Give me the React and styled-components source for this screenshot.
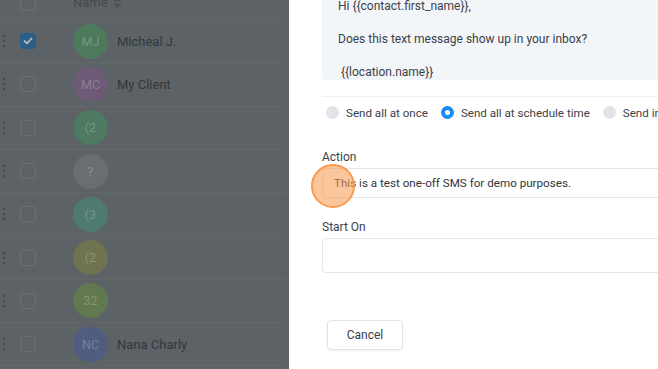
import React from 'react';
import styled, { createGlobalStyle } from 'styled-components';

const GlobalStyle = createGlobalStyle`
  html, body {
    margin: 0;
    padding: 0;
    overflow: hidden;
    background: #ffffff;
  }
  body {
    font-family: Roboto, "Liberation Sans", sans-serif;
  }
`

const Page = styled.div`
  display: grid;
  grid-template-columns: 289px 1fr;
  width: 658px;
  height: 369px;
  overflow: hidden;
`

/* dimmed contact list behind the drawer */
const ListSide = styled.div`
  background: #5c6266;
  overflow: hidden;
  padding-right: 2px;
`
const HeaderRow = styled.div`
  display: flex;
  align-items: center;
  height: 33px;
  margin-top: -14px;
  border-bottom: 1px solid #63686b;
`
const Row = styled.div`
  display: flex;
  align-items: center;
  height: 43.3px;
  box-sizing: border-box;
  border-bottom: 1px solid #63686b;
`
const Grip = styled.div`
  width: 20px;
  display: flex;
  flex-direction: column;
  align-items: flex-start;
  padding-left: 3px;
  box-sizing: border-box;
  gap: 3px;
  span {
    width: 2px;
    height: 2px;
    border-radius: 50%;
    background: #3c4043;
  }
`
const Check = styled.div`
  width: 16px;
  height: 16px;
  box-sizing: border-box;
  border-radius: 3px;
  border: 1px solid ${(p) => (p.checked ? '#2d5f86' : '#6a6f72')};
  background: ${(p) => (p.checked ? '#2d5f86' : 'transparent')};
  display: flex;
  align-items: center;
  justify-content: center;
  margin-right: 37px;
`
const Avatar = styled.div`
  width: 35px;
  height: 35px;
  border-radius: 50%;
  background: ${(p) => p.color};
  color: rgba(255, 255, 255, 0.22);
  font-size: 12.5px;
  display: flex;
  align-items: center;
  justify-content: center;
  flex-shrink: 0;
`
const Name = styled.div`
  margin-left: 9px;
  font-size: 13px;
  color: #34383b;
`
const HeadName = styled.div`
  font-size: 13px;
  color: #464b4e;
  display: flex;
  align-items: center;
  gap: 5px;
`

/* drawer */
const Drawer = styled.div`
  background: #ffffff;
  padding-left: 33px;
  display: flex;
  flex-direction: column;
  overflow: hidden;
  color: #3b4149;
  font-size: 12px;
`
const MessageBox = styled.div`
  margin-top: -10px;
  height: 90px;
  box-sizing: border-box;
  padding: 8px 16px 0;
  background: #f3f6f9;
  border-radius: 0 0 4px 4px;
  line-height: 16.5px;
  color: #3b4149;
  overflow: hidden;
  white-space: pre;
  width: 420px;
`
const Divider = styled.div`
  margin-top: 16px;
  border-top: 1px solid #eef0f3;
  width: 420px;
`
const RadioRow = styled.div`
  display: flex;
  align-items: center;
  height: 31px;
  padding-left: 4px;
  white-space: nowrap;
  font-size: 11.6px;
`
const RadioOption = styled.label`
  display: flex;
  align-items: center;
  gap: 7px;
  margin-right: 13px;
  color: #3b4149;
`
const RadioDot = styled.span`
  width: 13px;
  height: 13px;
  border-radius: 50%;
  box-sizing: border-box;
  background: ${(p) => (p.on ? '#1c8af5' : '#e1e3e9')};
  display: flex;
  align-items: center;
  justify-content: center;
  &::after {
    content: '';
    width: 5px;
    height: 5px;
    border-radius: 50%;
    background: #ffffff;
    display: ${(p) => (p.on ? 'block' : 'none')};
  }
`
const Label = styled.div`
  font-size: 12px;
  line-height: 16px;
  color: #3b4149;
  margin-top: ${(p) => p.gap}px;
  margin-bottom: 3px;
`
const FieldWrap = styled.div`
  position: relative;
`
const Input = styled.div`
  width: 420px;
  height: ${(p) => p.h}px;
  box-sizing: border-box;
  border: 1px solid #e2e5e9;
  border-radius: 4px;
  padding: 0 11px;
  display: flex;
  align-items: center;
  font-size: 11.65px;
  color: #2f353c;
  white-space: nowrap;
`
const ClickMark = styled.div`
  position: absolute;
  left: -11px;
  top: -4px;
  width: 44px;
  height: 44px;
  box-sizing: border-box;
  border-radius: 50%;
  border: 2px solid #f99a4e;
  background: rgba(248, 151, 74, 0.55);
`
const CancelButton = styled.button`
  margin-top: 47px;
  margin-left: 5px;
  width: 76px;
  height: 30px;
  background: #ffffff;
  border: 1px solid #dfe2e6;
  border-radius: 4px;
  font-family: inherit;
  font-size: 12px;
  color: #3b4149;
  box-shadow: 0 1px 2px rgba(0, 0, 0, 0.05);
`

const contacts = [
  { initials: 'MJ', color: '#4e7a5c', name: 'Micheal J.', checked: true },
  { initials: 'MC', color: '#6c5a77', name: 'My Client' },
  { initials: '(2', color: '#4e7a62', name: '' },
  { initials: '?', color: '#686e72', name: '' },
  { initials: '(3', color: '#4e7a72', name: '' },
  { initials: '(2', color: '#6f734f', name: '' },
  { initials: '32', color: '#62784f', name: '' },
  { initials: 'NC', color: '#4f5e80', name: 'Nana Charly' },
]

const message = 'Hi {{contact.first_name}},\n\nDoes this text message show up in your inbox?\n\n {{location.name}}\n'

const App = () => {
  return (
    <Page>
      <GlobalStyle />
      <ListSide>
        <HeaderRow>
          <Grip />
          <Check />
          <HeadName>
            Name
            <svg width="9" height="13" viewBox="0 0 9 13">
              <path d="M4.5 1 L8.5 5.5 L0.5 5.5 Z" fill="#4c5154" />
              <path d="M4.5 12 L8.5 7.5 L0.5 7.5 Z" fill="#4c5154" />
            </svg>
          </HeadName>
        </HeaderRow>
        {contacts.map((c, i) => (
          <Row key={i}>
            <Grip>
              <span />
              <span />
              <span />
            </Grip>
            <Check checked={c.checked}>
              {c.checked && (
                <svg width="10" height="8" viewBox="0 0 10 8">
                  <path d="M1.5 4 L4 6.3 L8.5 1.5" stroke="#aebdc9" strokeWidth="1.8" fill="none" strokeLinecap="round" strokeLinejoin="round" />
                </svg>
              )}
            </Check>
            <Avatar color={c.color}>{c.initials}</Avatar>
            {c.name && <Name>{c.name}</Name>}
          </Row>
        ))}
      </ListSide>

      <Drawer>
        <MessageBox>{message}</MessageBox>
        <Divider />
        <RadioRow>
          <RadioOption>
            <RadioDot />
            Send all at once
          </RadioOption>
          <RadioOption>
            <RadioDot on />
            Send all at schedule time
          </RadioOption>
          <RadioOption>
            <RadioDot />
            Send in drip mode
          </RadioOption>
        </RadioRow>

        <Label gap={21}>Action</Label>
        <FieldWrap>
          <Input h={30}>This is a test one-off SMS for demo purposes.</Input>
          <ClickMark />
        </FieldWrap>

        <Label gap={21}>Start On</Label>
        <Input h={35} />

        <div>
          <CancelButton>Cancel</CancelButton>
        </div>
      </Drawer>
    </Page>
  )
}

export default App;
